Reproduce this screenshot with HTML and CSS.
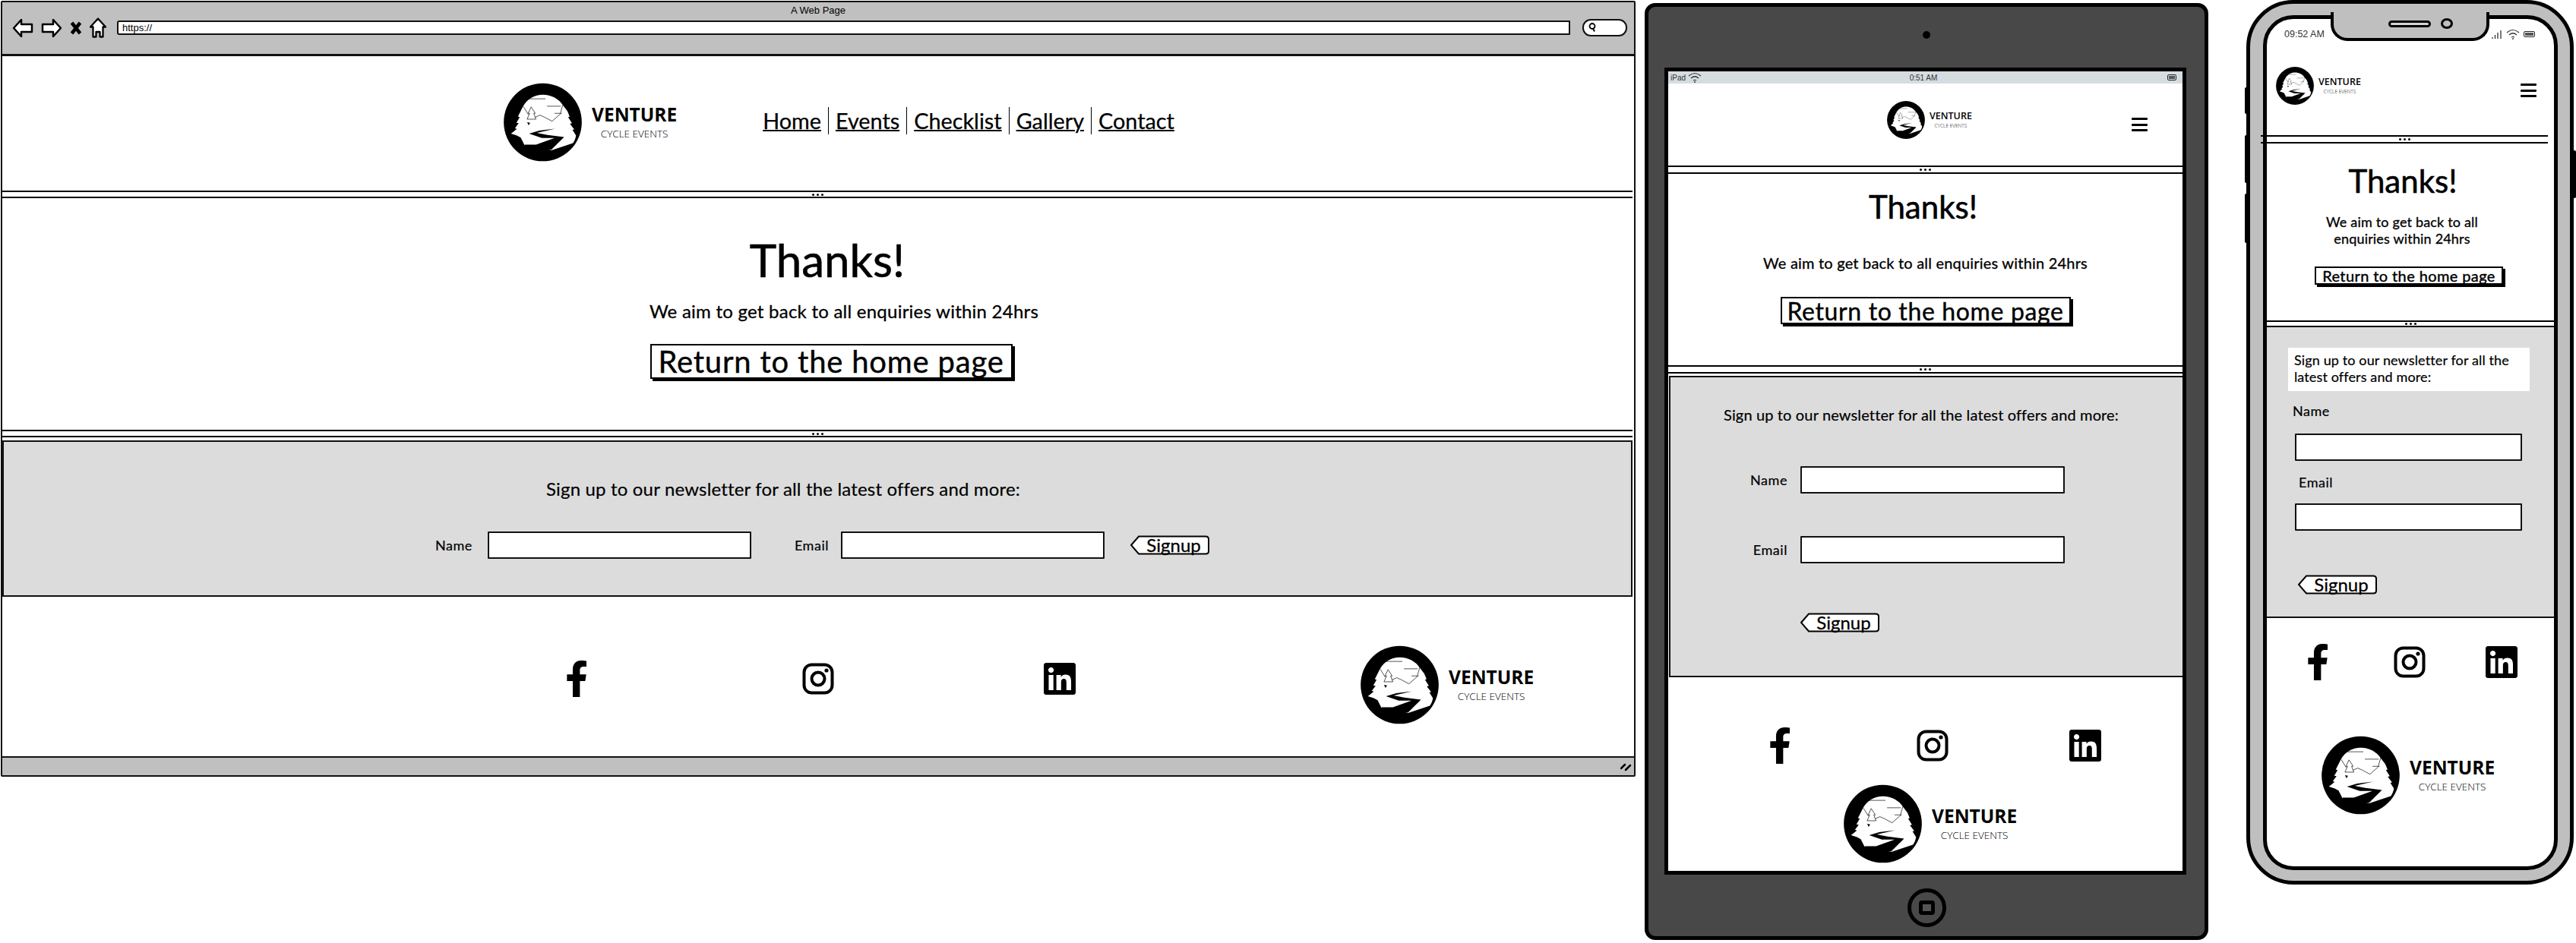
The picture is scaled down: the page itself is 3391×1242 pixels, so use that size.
FILE: index.html
```html
<!DOCTYPE html>
<html lang="en">

<head>
  <meta charset="UTF-8">
  <title>Venture Cycle Events - wireframes</title>
  <link rel="stylesheet" href="styles.css">
</head>

<body>
  <!-- shared icons -->
  <svg class="sprite" aria-hidden="true">
    <symbol id="logo" viewBox="68 58 307 304">
      <circle cx="221.5" cy="210" r="153" fill="#000" />
      <path fill="#fff" d="M97 255L120 236L112 234L127 214L118 212L131 190L124 188L136 164L143 150C160 118 190 102 222 102C255 102 285 118 302 145L318 166L327 188L321 190L336 214L328 216L345 238L338 240L352 262C350 275 345 285 340 292L255 320L150 300L135 270L120 262Z" />
      <path fill="#000" d="M270 235L208 243L168 255L218 272L268 272L195 298L150 298L170 330L255 318L305 268L240 260L198 252Z" />
      <path fill="none" stroke="#000" stroke-width="2" d="M160 118H232M238 147H292M268 175H296M145 148L165 180M188 192L210 182L228 190L258 206L290 178L300 142" />
      <path fill="#fff" stroke="#000" stroke-width="2" d="M176 150L164 175L170 175L160 198L195 198L186 175L192 175Z" />
      <path fill="#000" d="M160 210L172 212L166 222Z" />
    </symbol>
    <symbol id="icon-facebook" viewBox="22 0 272 512">
      <path d="M279.14 288l14.22-92.66h-88.91v-60.13c0-25.35 12.42-50.06 52.24-50.06h40.42V6.26S260.43 0 225.36 0c-73.22 0-121.08 44.38-121.08 124.72v70.62H22.89V288h81.39v224h100.17V288z" />
    </symbol>
    <symbol id="icon-instagram" viewBox="0 0 42 42">
      <rect x="2.5" y="2.5" width="37" height="37" rx="10" fill="none" stroke="#000" stroke-width="4" />
      <circle cx="21" cy="21" r="8.5" fill="none" stroke="#000" stroke-width="4" />
      <circle cx="32" cy="10" r="2.6" />
    </symbol>
    <symbol id="icon-linkedin" viewBox="0 32 448 448">
      <path d="M416 32H31.9C14.3 32 0 46.5 0 64.3v383.4C0 465.5 14.3 480 31.9 480H416c17.6 0 32-14.5 32-32.3V64.3c0-17.8-14.4-32.3-32-32.3zM135.4 416H69V202.2h66.5V416zm-33.2-243c-21.3 0-38.5-17.3-38.5-38.5S80.9 96 102.2 96c21.2 0 38.5 17.3 38.5 38.5 0 21.3-17.2 38.5-38.5 38.5zm282.1 243h-66.4V312c0-24.8-.5-56.7-34.5-56.7-34.6 0-39.9 27-39.9 54.9V416h-66.4V202.2h63.7v29.2h.9c8.9-16.8 30.6-34.5 62.9-34.5 67.2 0 79.7 44.3 79.7 101.9V416z" />
    </symbol>
    <symbol id="tag" viewBox="0 0 104 26" preserveAspectRatio="none">
      <path d="M1 13L11 1.5H99Q103 1.5 103 5V21Q103 24.5 99 24.5H11Z" fill="#fff" stroke="#000" stroke-width="2" />
    </symbol>
    <symbol id="icon-wifi" viewBox="0 0 18 14">
      <path d="M1 5Q9 -2 17 5M4 8Q9 3.500 14 8M7 11Q9 9.500 11 11" fill="none" stroke="#333" stroke-width="1.200" />
      <circle cx="9" cy="13" r="1" fill="#333" />
    </symbol>
  </svg>

  <!-- desktop -->
  <section class="device browser">
    <div class="browser-top">
      <div class="browser-title">A Web Page</div>
      <div class="toolbar">
        <svg class="tool-back" viewBox="0 0 28 26"><path d="M2 13L12 2V8H26V18H12V24Z" fill="#fff" stroke="#000" stroke-width="2.500" stroke-linejoin="round" /></svg>
        <svg class="tool-forward" viewBox="0 0 28 26"><path d="M26 13L16 2V8H2V18H16V24Z" fill="#fff" stroke="#000" stroke-width="2.500" stroke-linejoin="round" /></svg>
        <svg class="tool-close" viewBox="0 0 16 18"><path d="M2.500 2L13.500 16M13.500 2L2.500 16" stroke="#000" stroke-width="4.500" /></svg>
        <svg class="tool-home" viewBox="0 0 22 27"><path d="M11 1.500L21 12.500H17.500V25.500H13.500V19H8.500V25.500H4.500V12.500H1Z" fill="#fff" stroke="#000" stroke-width="2.300" stroke-linejoin="round" /></svg>
        <div class="url-bar">https://</div>
        <div class="search-box">
          <svg viewBox="0 0 10 13"><circle cx="5" cy="5" r="3.500" fill="none" stroke="#000" stroke-width="1.800" /><path d="M6 8L8 12" stroke="#000" stroke-width="1.800" /></svg>
        </div>
      </div>
    </div>

    <div class="site">
      <header class="site-header">
        <a class="brand brand-lg">
          <svg class="brand-logo"><use href="#logo" /></svg>
          <span class="brand-text"><b>VENTURE</b><small>CYCLE EVENTS</small></span>
        </a>
        <nav class="site-nav">
          <a>Home</a>
          <a>Events</a>
          <a>Checklist</a>
          <a>Gallery</a>
          <a>Contact</a>
        </nav>
      </header>
      <div class="divider"></div>
      <main class="thanks">
        <h1>Thanks!</h1>
        <p>We aim to get back to all enquiries within 24hrs</p>
        <a class="home-btn">Return to the home page</a>
      </main>
      <div class="divider"></div>
      <section class="newsletter">
        <p class="newsletter-text">Sign up to our newsletter for all the latest offers and more:</p>
        <form class="newsletter-form">
          <div class="field"><label>Name</label><input type="text"></div>
          <div class="field field-email"><label>Email</label><input type="text"></div>
          <button class="signup" type="button"><svg><use href="#tag" /></svg><span>Signup</span></button>
        </form>
      </section>
      <footer class="site-footer">
        <div class="social">
          <a><svg class="icon-f"><use href="#icon-facebook" /></svg></a>
          <a><svg class="icon-sq"><use href="#icon-instagram" /></svg></a>
          <a><svg class="icon-sq"><use href="#icon-linkedin" /></svg></a>
        </div>
        <a class="brand brand-lg">
          <svg class="brand-logo"><use href="#logo" /></svg>
          <span class="brand-text"><b>VENTURE</b><small>CYCLE EVENTS</small></span>
        </a>
      </footer>
    </div>

    <div class="browser-bottom">
      <svg class="grip" viewBox="0 0 15 12"><path d="M1 8L6 3M7 10L13 4" stroke="#000" stroke-width="2.500" stroke-linecap="round" /></svg>
    </div>
  </section>

  <!-- tablet -->
  <section class="device tablet">
    <div class="tablet-camera"></div>
    <div class="tablet-screen">
      <div class="status-bar">
        <span class="status-left">iPad <svg class="status-wifi"><use href="#icon-wifi" /></svg></span>
        <span>0:51 AM</span>
        <span class="status-right"><i class="battery"></i></span>
      </div>
      <div class="site">
        <header class="site-header">
          <a class="brand brand-sm">
            <svg class="brand-logo"><use href="#logo" /></svg>
            <span class="brand-text"><b>VENTURE</b><small>CYCLE EVENTS</small></span>
          </a>
          <div class="burger"><span></span><span></span><span></span></div>
        </header>
        <div class="divider"></div>
        <main class="thanks">
          <h1>Thanks!</h1>
          <p>We aim to get back to all enquiries within 24hrs</p>
          <a class="home-btn">Return to the home page</a>
        </main>
        <div class="divider"></div>
        <section class="newsletter">
          <p class="newsletter-text">Sign up to our newsletter for all the latest offers and more:</p>
          <form class="newsletter-form">
            <div class="field"><label>Name</label><input type="text"></div>
            <div class="field field-email"><label>Email</label><input type="text"></div>
            <button class="signup" type="button"><svg><use href="#tag" /></svg><span>Signup</span></button>
          </form>
        </section>
        <footer class="site-footer">
          <div class="social">
            <a><svg class="icon-f"><use href="#icon-facebook" /></svg></a>
            <a><svg class="icon-sq"><use href="#icon-instagram" /></svg></a>
            <a><svg class="icon-sq"><use href="#icon-linkedin" /></svg></a>
          </div>
          <a class="brand brand-lg">
            <svg class="brand-logo"><use href="#logo" /></svg>
            <span class="brand-text"><b>VENTURE</b><small>CYCLE EVENTS</small></span>
          </a>
        </footer>
      </div>
    </div>
    <div class="tablet-home"><span></span></div>
  </section>

  <!-- phone -->
  <section class="device phone">
    <span class="phone-key key-mute"></span>
    <span class="phone-key key-up"></span>
    <span class="phone-key key-down"></span>
    <span class="phone-key key-power"></span>
    <div class="phone-screen">
      <div class="phone-notch"><span class="speaker"></span><span class="lens"></span></div>
      <div class="status-bar">
        <span>09:52 AM</span>
        <span class="status-right">
          <svg class="status-signal" viewBox="0 0 14 12"><path d="M1 12V10M4.500 12V7M8 12V4M12 12V1" stroke="#333" stroke-width="1.300" /></svg>
          <svg class="status-wifi"><use href="#icon-wifi" /></svg>
          <i class="battery"></i>
        </span>
      </div>
      <div class="site">
        <header class="site-header">
          <a class="brand brand-sm">
            <svg class="brand-logo"><use href="#logo" /></svg>
            <span class="brand-text"><b>VENTURE</b><small>CYCLE EVENTS</small></span>
          </a>
          <div class="burger"><span></span><span></span><span></span></div>
        </header>
        <div class="divider"></div>
        <main class="thanks">
          <h1>Thanks!</h1>
          <p>We aim to get back to all enquiries within 24hrs</p>
          <a class="home-btn">Return to the home page</a>
        </main>
        <div class="divider"></div>
        <section class="newsletter">
          <p class="newsletter-text">Sign up to our newsletter for all the latest offers and more:</p>
          <form class="newsletter-form">
            <div class="field"><label>Name</label><input type="text"></div>
            <div class="field field-email"><label>Email</label><input type="text"></div>
            <button class="signup" type="button"><svg><use href="#tag" /></svg><span>Signup</span></button>
          </form>
        </section>
        <footer class="site-footer">
          <div class="social">
            <a><svg class="icon-f"><use href="#icon-facebook" /></svg></a>
            <a><svg class="icon-sq"><use href="#icon-instagram" /></svg></a>
            <a><svg class="icon-sq"><use href="#icon-linkedin" /></svg></a>
          </div>
          <a class="brand brand-lg">
            <svg class="brand-logo"><use href="#logo" /></svg>
            <span class="brand-text"><b>VENTURE</b><small>CYCLE EVENTS</small></span>
          </a>
        </footer>
      </div>
    </div>
  </section>
</body>

</html>
```

FILE: styles.css
```css
* {
  box-sizing: border-box;
}

body {
  margin: 0;
  width: 3391px;
  height: 1242px;
  position: relative;
  overflow: hidden;
  background: #fff;
  color: #000;
  font-family: Lato, "Liberation Sans", sans-serif;
}

.sprite {
  position: absolute;
  width: 0;
  height: 0;
}

.device {
  position: absolute;
}

/* shared page parts */
.site {
  display: flex;
  flex-direction: column;
}

.site-header {
  display: flex;
  align-items: flex-start;
}

.divider {
  display: flex;
  justify-content: center;
  align-items: center;
  border-top: 2px solid #000;
  border-bottom: 2px solid #000;
}

.divider::before {
  content: "";
  width: 3px;
  height: 3px;
  border-radius: 50%;
  background: #000;
  box-shadow: -6px 0 0 #000, 6px 0 0 #000;
}

.brand {
  display: flex;
  align-items: center;
}

.brand-text {
  display: flex;
  flex-direction: column;
  align-items: center;
  font-family: "Open Sans", sans-serif;
}

.brand-text b {
  font-weight: 700;
}

.brand-text small {
  font-weight: 300;
}

.brand-lg .brand-logo {
  width: 103px;
  height: 104px;
}

.brand-lg .brand-text {
  margin-left: 13px;
}

.brand-lg b {
  font-size: 24.500px;
  line-height: 30px;
}

.brand-lg small {
  font-size: 13.500px;
  line-height: 20px;
}

.brand-sm .brand-logo {
  width: 50px;
  height: 50px;
}

.brand-sm .brand-text {
  margin-left: 6px;
  margin-top: -2px;
}

.brand-sm b {
  font-size: 12.500px;
  font-weight: 600;
  line-height: 16px;
}

.brand-sm small {
  font-size: 6.500px;
  line-height: 9px;
}

.thanks {
  display: flex;
  flex-direction: column;
  align-items: center;
}

.thanks h1 {
  margin: 0;
  font-weight: 400;
  -webkit-text-stroke: 0.6px #000;
}

.thanks p {
  margin: 0;
  letter-spacing: 0.01em;
  -webkit-text-stroke: 0.3px #000;
}

.home-btn {
  display: flex;
  align-items: center;
  justify-content: center;
  background: #fff;
  border: 2px solid #000;
  box-shadow: 3px 3px 0 #000;
  letter-spacing: 0.02em;
  -webkit-text-stroke: 0.4px #000;
}

.newsletter {
  background: #dcdcdc;
  border: 2px solid #111;
}

.newsletter-text {
  margin: 0;
  letter-spacing: 0.007em;
  -webkit-text-stroke: 0.2px #000;
}

.newsletter-form {
  display: flex;
}

.field {
  display: flex;
}

.field label {
  letter-spacing: 0.03em;
  line-height: 20px;
  -webkit-text-stroke: 0.2px #000;
}

.field input {
  display: block;
  height: 36px;
  background: #fff;
  border: 2px solid #111;
  border-radius: 1px;
  padding: 0;
}

.signup {
  position: relative;
  width: 104px;
  height: 26px;
  padding: 0 0 0 10px;
  background: none;
  border: 0;
  font-family: inherit;
  font-size: 24px;
  line-height: 24px;
  color: #000;
  -webkit-text-stroke: 0.3px #000;
}

.signup svg {
  position: absolute;
  left: 0;
  top: 0;
  width: 104px;
  height: 26px;
}

.signup span {
  position: relative;
}

.site-footer {
  display: flex;
}

.social {
  display: flex;
}

.social a {
  display: flex;
  justify-content: center;
  align-items: center;
  height: 42px;
}

.icon-f {
  width: 26px;
  height: 48px;
  flex: none;
}

.icon-sq {
  width: 42px;
  height: 42px;
}

.burger {
  display: flex;
  flex-direction: column;
  justify-content: space-between;
  width: 21px;
  height: 18px;
}

.burger span {
  height: 3px;
  border-radius: 1px;
  background: #000;
}

.status-bar {
  color: #333;
  font-family: "Liberation Sans", sans-serif;
}

.status-right {
  display: flex;
  align-items: center;
}

.status-wifi {
  width: 18px;
  height: 14px;
}

.battery {
  display: block;
  width: 12px;
  height: 8px;
  border: 1.500px solid #222;
  border-radius: 2px;
  background: #555;
  background-clip: content-box;
  padding: 1px;
}

/* desktop */
.browser {
  left: 1px;
  top: 1px;
  width: 2152px;
  height: 1022px;
  display: flex;
  flex-direction: column;
  border: 2px solid #111;
  border-radius: 2px;
}

.browser-top {
  height: 71px;
  background: #c0c0c0;
  border-bottom: 3px solid #111;
}

.browser-title {
  height: 20px;
  padding-top: 3px;
  text-align: center;
  font-family: "Liberation Sans", sans-serif;
  font-size: 13px;
  line-height: 16px;
}

.toolbar {
  display: flex;
  align-items: center;
  gap: 10px;
  height: 27px;
  padding: 0 9px 0 13px;
}

.tool-back,
.tool-forward {
  width: 28px;
  height: 26px;
}

.tool-close {
  width: 16px;
  height: 18px;
}

.tool-home {
  width: 22px;
  height: 27px;
}

.url-bar {
  flex: 1;
  height: 19px;
  margin: 0 6px 0 4px;
  padding-left: 5px;
  background: #fff;
  border: 2px solid #111;
  border-radius: 3px 1px 1px 3px;
  font-family: "Liberation Sans", sans-serif;
  font-size: 13px;
  line-height: 15px;
}

.search-box {
  width: 59px;
  height: 23px;
  padding-left: 6px;
  background: #fff;
  border: 2px solid #111;
  border-radius: 11px;
}

.search-box svg {
  display: block;
  width: 10px;
  height: 14px;
  margin-top: 2px;
}

.browser .site {
  flex: 1;
}

.browser .site-header {
  height: 177px;
  align-items: center;
  padding: 0 0 4px 660px;
}

.site-nav {
  display: flex;
  margin: -4px 0 0 113px;
  font-size: 28.800px;
  line-height: 36px;
  -webkit-text-stroke: 0.25px #000;
}

.site-nav a {
  padding: 0 9px;
  text-decoration: underline;
  text-decoration-thickness: 2px;
  border-right: 1px solid #000;
}

.site-nav a:first-child {
  padding-left: 0;
}

.site-nav a:last-child {
  border-right: 0;
}

.browser .divider {
  height: 10px;
  margin-right: 2px;
}

.browser .thanks {
  height: 305px;
  padding-top: 51px;
}

.browser h1 {
  font-size: 60px;
  line-height: 60px;
  margin-left: 24px;
}

.browser .thanks p {
  font-size: 24px;
  line-height: 30px;
  margin: 23px 0 0 68px;
}

.browser .home-btn {
  width: 477px;
  height: 46px;
  margin: 28px 0 0 34px;
  font-size: 40px;
}

.browser .newsletter {
  height: 206px;
  margin: 4px 2px 0 0;
  padding-top: 47px;
}

.browser .newsletter-text {
  padding-right: 90px;
  text-align: center;
  font-size: 24px;
  line-height: 30px;
}

.browser .newsletter-form {
  align-items: center;
  height: 36px;
  margin-top: 41px;
  padding-left: 568px;
}

.browser .field {
  align-items: center;
  font-size: 18px;
}

.browser .field input {
  width: 347px;
  margin-left: 20px;
}

.browser .field-email {
  margin-left: 57px;
}

.browser .field-email input {
  margin-left: 16px;
}

.browser .signup {
  margin-left: 34px;
}

.browser .site-footer {
  flex: 1;
  align-items: flex-start;
  padding: 64px 0 0 597px;
}

.browser .social {
  margin-top: 23px;
}

.browser .social a {
  width: 318px;
}

.browser .site-footer .brand {
  margin-left: 237px;
}

.browser-bottom {
  height: 25px;
  display: flex;
  justify-content: flex-end;
  align-items: center;
  padding-right: 3px;
  background: #c0c0c0;
  border-top: 2px solid #111;
}

.grip {
  width: 15px;
  height: 12px;
}

/* tablet */
.tablet {
  left: 2165px;
  top: 4px;
  width: 742px;
  height: 1234px;
  display: flex;
  flex-direction: column;
  align-items: center;
  background: #484848;
  border: 5px solid #000;
  border-radius: 14px;
}

.tablet-camera {
  flex: none;
  width: 10px;
  height: 10px;
  margin-top: 32px;
  border-radius: 50%;
  background: #000;
}

.tablet-screen {
  flex: none;
  align-self: flex-start;
  width: 687px;
  height: 1063px;
  margin: 38px 0 0 21px;
  background: #fff;
  border: 5px solid #000;
}

.tablet .status-bar {
  display: grid;
  grid-template-columns: 1fr auto 1fr;
  align-items: center;
  height: 16px;
  padding: 0 8px 0 3px;
  background: #d6dde1;
  font-size: 10px;
}

.tablet .status-left {
  display: flex;
  align-items: center;
  gap: 3px;
}

.tablet .status-right {
  justify-content: flex-end;
}

.tablet .site-header {
  height: 108px;
  justify-content: space-between;
  padding: 23px 46px 0 288px;
}

.tablet .burger {
  margin-top: 22px;
}

.tablet .divider {
  height: 11px;
}

.tablet .thanks {
  height: 252px;
  padding-top: 21px;
}

.tablet h1 {
  font-size: 42px;
  line-height: 44px;
  margin-left: -6px;
}

.tablet .thanks p {
  font-size: 20px;
  line-height: 26px;
  margin-top: 39px;
}

.tablet .home-btn {
  width: 382px;
  height: 36px;
  margin-top: 32px;
  font-size: 32px;
}

.tablet .newsletter {
  height: 397px;
  margin: 3px 0 0 1px;
  padding-top: 34px;
  border-right: 0;
}

.tablet .newsletter-text {
  padding-right: 14px;
  text-align: center;
  font-size: 20px;
  line-height: 30px;
}

.tablet .newsletter-form {
  flex-direction: column;
  align-items: flex-start;
  margin-top: 53px;
}

.tablet .field {
  align-items: center;
  font-size: 18px;
}

.tablet .field label {
  width: 171px;
  padding-right: 17px;
  text-align: right;
}

.tablet .field input {
  width: 348px;
}

.tablet .field-email {
  margin-top: 56px;
}

.tablet .signup {
  margin: 65px 0 0 171px;
}

.tablet .site-footer {
  flex-direction: column;
  align-items: flex-start;
  padding: 69px 0 0 46px;
}

.tablet .social a {
  width: 201px;
}

.tablet .site-footer .brand {
  margin: 30px 0 0 185px;
}

.tablet-home {
  flex: none;
  display: flex;
  justify-content: center;
  align-items: center;
  width: 51px;
  height: 51px;
  margin-top: 18px;
  border: 5px solid #000;
  border-radius: 50%;
}

.tablet-home span {
  width: 21px;
  height: 19px;
  border: 5px solid #000;
  border-radius: 4px;
  background: #555;
}

/* phone */
.phone {
  left: 2957px;
  top: 0;
  width: 431px;
  height: 1165px;
  background: #bfbfbf;
  border: 5px solid #000;
  border-radius: 62px;
  padding: 15px 16px 0 17px;
}

.phone-key {
  position: absolute;
  width: 4px;
  background: #000;
  border-radius: 2px;
}

.key-mute {
  left: -7px;
  top: 110px;
  height: 35px;
}

.key-up {
  left: -7px;
  top: 173px;
  height: 63px;
}

.key-down {
  left: -7px;
  top: 250px;
  height: 65px;
}

.key-power {
  right: -8px;
  top: 193px;
  height: 63px;
}

.phone-screen {
  position: relative;
  width: 388px;
  height: 1126px;
  background: #fff;
  border: 5px solid #000;
  border-radius: 40px;
}

.phone-notch {
  position: absolute;
  left: 84px;
  top: -9px;
  width: 209px;
  height: 38px;
  display: flex;
  align-items: center;
  padding: 0 0 4px 72px;
  background: #bfbfbf;
  border: 4px solid #000;
  border-top: 0;
  border-radius: 0 0 22px 22px;
}

.speaker {
  width: 56px;
  height: 9px;
  border: 3px solid #000;
  border-radius: 5px;
  background: #d5d5d5;
}

.lens {
  width: 16px;
  height: 14px;
  margin-left: 13px;
  border: 3px solid #000;
  border-radius: 50%;
  background: #bfbfbf;
}

.phone .status-bar {
  display: flex;
  justify-content: space-between;
  align-items: center;
  height: 39px;
  padding: 0 25px 0 23px;
  font-size: 12.500px;
}

.phone .status-right {
  gap: 5px;
}

.status-signal {
  width: 14px;
  height: 12px;
}

.phone .battery {
  width: 15px;
}

.phone .site-header {
  height: 114px;
  justify-content: space-between;
  padding: 24px 23px 0 12px;
}

.phone .burger {
  margin-top: 22px;
}

.phone .divider {
  height: 11px;
  margin: 0 8px 0 -8px;
}

.phone .thanks {
  height: 233px;
  padding-top: 27px;
}

.phone h1 {
  font-size: 42px;
  line-height: 44px;
  margin-left: -20px;
}

.phone .thanks p {
  width: 230px;
  font-size: 18px;
  line-height: 22px;
  text-align: center;
  margin: 21px 0 0 -22px;
}

.phone .home-btn {
  width: 248px;
  height: 24px;
  margin: 26px 0 0 -4px;
  font-size: 20px;
}

.phone .thanks + .divider {
  height: 9px;
  margin: 0;
}

.phone .newsletter {
  height: 383px;
  padding: 27px 0 0 28px;
  border-width: 0 0 2px 0;
}

.phone .newsletter-text {
  width: 318px;
  padding: 5px 8px 8px;
  background: #fff;
  font-size: 18px;
  line-height: 22px;
}

.phone .newsletter-form {
  flex-direction: column;
  align-items: flex-start;
  margin-top: 16px;
}

.phone .field {
  flex-direction: column;
  align-items: flex-start;
  font-size: 18px;
}

.phone .field label {
  margin-left: 6px;
}

.phone .field input {
  width: 299px;
  margin: 20px 0 0 9px;
}

.phone .field-email {
  margin-top: 18px;
}

.phone .field-email label {
  margin-left: 14px;
}

.phone .field-email input {
  margin-top: 18px;
}

.phone .signup {
  margin: 58px 0 0 13px;
}

.phone .site-footer {
  flex-direction: column;
  align-items: flex-start;
  padding: 37px 0 0 6px;
}

.phone .social a {
  width: 121px;
}

.phone .site-footer .brand {
  margin: 76px 0 0 66px;
}
```
